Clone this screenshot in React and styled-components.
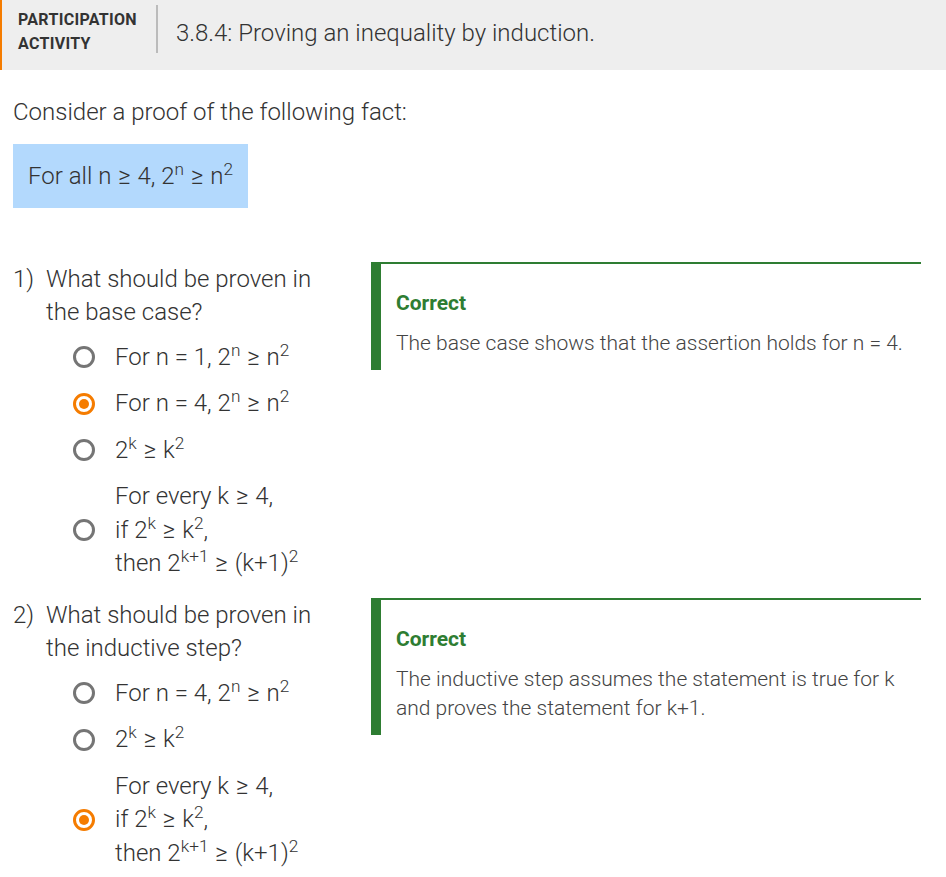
import React from "react";
import styled, { createGlobalStyle } from "styled-components";

const GlobalStyle = createGlobalStyle`
  body {
    margin: 0;
    background: #ffffff;
    font-family: "Roboto Light", Roboto, "Noto Sans", sans-serif;
    color: #333333;
  }
`;

const Page = styled.div`
  width: 946px;
`;

const Header = styled.div`
  display: flex;
  align-items: center;
  height: 70px;
  background: #eeeeee;
  border-left: 2px solid #f57c00;
  box-sizing: border-box;
`;

const Label = styled.div`
  padding: 0 19px 0 16px;
  font-family: Roboto, sans-serif;
  font-size: 16px;
  letter-spacing: 0.3px;
  font-weight: 700;
  line-height: 24px;
  text-transform: uppercase;
  color: #333333;
  margin-top: -6px;
`;

const Divider = styled.div`
  width: 2px;
  height: 48px;
  background: #bbbbbb;
  margin-top: -12px;
`;

const Title = styled.h1`
  margin: -4px 0 0 18px;
  font-size: 24px;
  font-weight: 300;
  color: #333333;
`;

const Content = styled.div`
  padding: 26px 13px 0;
`;

const Intro = styled.p`
  margin: 0;
  font-size: 24px;
  font-weight: 300;
  line-height: 33px;
`;

const Fact = styled.div`
  display: inline-block;
  margin-top: 15px;
  padding: 0 15px;
  height: 64px;
  line-height: 64px;
  background: #b3d9fd;
  font-size: 24px;
  font-weight: 300;
  box-sizing: border-box;
`;

const Questions = styled.div`
  margin-top: 54px;
  display: flex;
  flex-direction: column;
  gap: 11px;
`;

const QuestionRow = styled.div`
  display: grid;
  grid-template-columns: 333px 550px;
  column-gap: 25px;
  align-items: start;
`;

const Prompt = styled.div`
  display: flex;
  font-size: 24px;
  font-weight: 300;
  line-height: 33px;
  margin-top: 1px;
`;

const Num = styled.span`
  width: 33px;
  flex: none;
`;

const Options = styled.div`
  margin: 5px 0 0 60px;
`;

const Option = styled.div`
  display: flex;
  align-items: center;
  gap: 20px;
  padding: 6.5px 0;
  font-size: 24px;
  font-weight: 300;
  line-height: 33.5px;
`;

const Radio = styled.span`
  width: 22px;
  height: 22px;
  flex: none;
  box-sizing: border-box;
  border-radius: 50%;
  border: 3px solid ${(p) => (p.$checked ? "#f57c00" : "#757575")};
  display: flex;
  align-items: center;
  justify-content: center;

  &::after {
    content: "";
    display: ${(p) => (p.$checked ? "block" : "none")};
    width: 10px;
    height: 10px;
    border-radius: 50%;
    background: #f57c00;
  }
`;

const Feedback = styled.div`
  border-top: 2px solid #2e7d32;
  border-left: 10px solid #2e7d32;
  padding: 26px 15px 12px;
`;

const Verdict = styled.div`
  font-family: Roboto, sans-serif;
  color: #2e7d32;
  font-size: 21px;
  font-weight: 700;
  line-height: 27px;
`;

const Explanation = styled.div`
  margin-top: 12px;
  font-size: 21px;
  font-weight: 300;
  line-height: 29px;
  color: #444444;
`;

const Sup = styled.sup`
  font-size: 0.72em;
  line-height: 0;
  vertical-align: 0.55em;
`;

const Ge = styled.span`
  margin: 0 1px;
`;

const ge = <Ge>{"\u2265"}</Ge>;

const twoN = (
  <>
    2<Sup>n</Sup> {ge} n<Sup>2</Sup>
  </>
);

const twoK = (
  <>
    2<Sup>k</Sup> {ge} k<Sup>2</Sup>
  </>
);

const stepText = (
  <>
    For every k {ge} 4,
    <br />
    if 2<Sup>k</Sup> {ge} k<Sup>2</Sup>,
    <br />
    then 2<Sup>k+1</Sup> {ge} (k+1)<Sup>2</Sup>
  </>
);

const questions = [
  {
    num: "1)",
    text: "What should be proven in the base case?",
    options: [
      <>For n = 1, {twoN}</>,
      <>For n = 4, {twoN}</>,
      twoK,
      stepText,
    ],
    checked: 1,
    explanation: "The base case shows that the assertion holds for n = 4.",
  },
  {
    num: "2)",
    text: "What should be proven in the inductive step?",
    options: [<>For n = 4, {twoN}</>, twoK, stepText],
    checked: 2,
    explanation:
      "The inductive step assumes the statement is true for k and proves the statement for k+1.",
  },
];

function App() {
  return (
    <Page>
      <GlobalStyle />
      <Header>
        <Label>
          Participation
          <br />
          Activity
        </Label>
        <Divider />
        <Title>3.8.4: Proving an inequality by induction.</Title>
      </Header>
      <Content>
        <Intro>Consider a proof of the following fact:</Intro>
        <Fact>For all n {ge} 4, {twoN}</Fact>
        <Questions>
          {questions.map((q) => (
            <QuestionRow key={q.num}>
              <div>
                <Prompt>
                  <Num>{q.num}</Num>
                  <span>{q.text}</span>
                </Prompt>
                <Options>
                  {q.options.map((o, i) => (
                    <Option key={i}>
                      <Radio $checked={i === q.checked} />
                      <span>{o}</span>
                    </Option>
                  ))}
                </Options>
              </div>
              <Feedback>
                <Verdict>Correct</Verdict>
                <Explanation>{q.explanation}</Explanation>
              </Feedback>
            </QuestionRow>
          ))}
        </Questions>
      </Content>
    </Page>
  );
}

export default App;
